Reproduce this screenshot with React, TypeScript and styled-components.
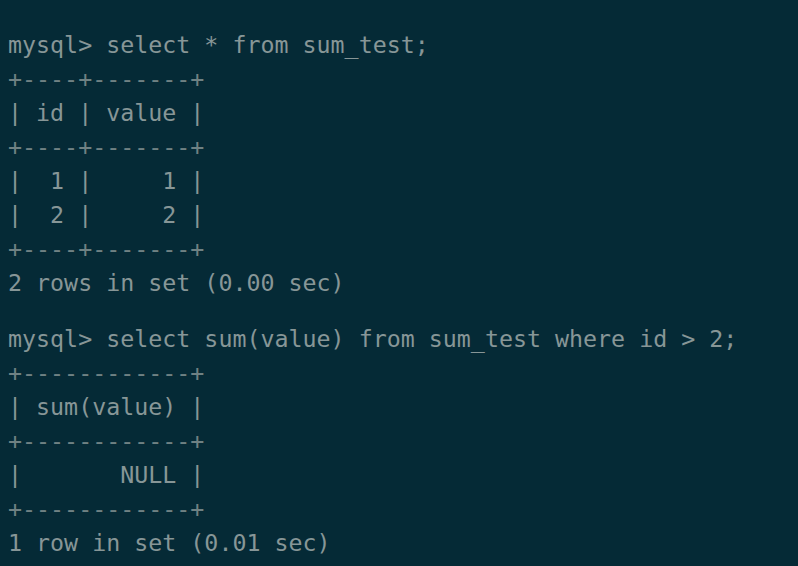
import React from "react";
import styled, { createGlobalStyle } from "styled-components";

const Global = createGlobalStyle`
  html, body {
    margin: 0;
    padding: 0;
    background: #052a36;
    overflow: hidden;
  }
`;

const Terminal = styled.div`
  width: 798px;
  height: 566px;
  box-sizing: border-box;
  background: #052a36;
  padding: 31px 0 0 8px;
  display: flex;
  flex-direction: column;
  gap: 22px;
  font-family: "DejaVu Sans Mono", "Liberation Mono", monospace;
  font-size: 23.3px;
  color: #879697;
`;

const Block = styled.div`
  display: flex;
  flex-direction: column;
`;

const Line = styled.pre<{ $dim?: boolean }>`
  margin: 0;
  height: 34px;
  line-height: 34px;
  font: inherit;
  white-space: pre;
  overflow: visible;
  color: ${(p) => (p.$dim ? "#6f8183" : "inherit")};
`;

const blocks: { text: string; dim?: boolean }[][] = [
  [
    { text: "mysql> select * from sum_test;" },
    { text: "+----+-------+", dim: true },
    { text: "| id | value |" },
    { text: "+----+-------+", dim: true },
    { text: "|  1 |     1 |" },
    { text: "|  2 |     2 |" },
    { text: "+----+-------+", dim: true },
    { text: "2 rows in set (0.00 sec)" },
  ],
  [
    { text: "mysql> select sum(value) from sum_test where id > 2;" },
    { text: "+------------+", dim: true },
    { text: "| sum(value) |" },
    { text: "+------------+", dim: true },
    { text: "|       NULL |" },
    { text: "+------------+", dim: true },
    { text: "1 row in set (0.01 sec)" },
  ],
];

export default function App() {
  return (
    <>
      <Global />
      <Terminal>
        {blocks.map((b, i) => (
          <Block key={i}>
            {b.map((l, j) => (
              <Line key={j} $dim={l.dim}>
                {l.text}
              </Line>
            ))}
          </Block>
        ))}
      </Terminal>
    </>
  );
}
